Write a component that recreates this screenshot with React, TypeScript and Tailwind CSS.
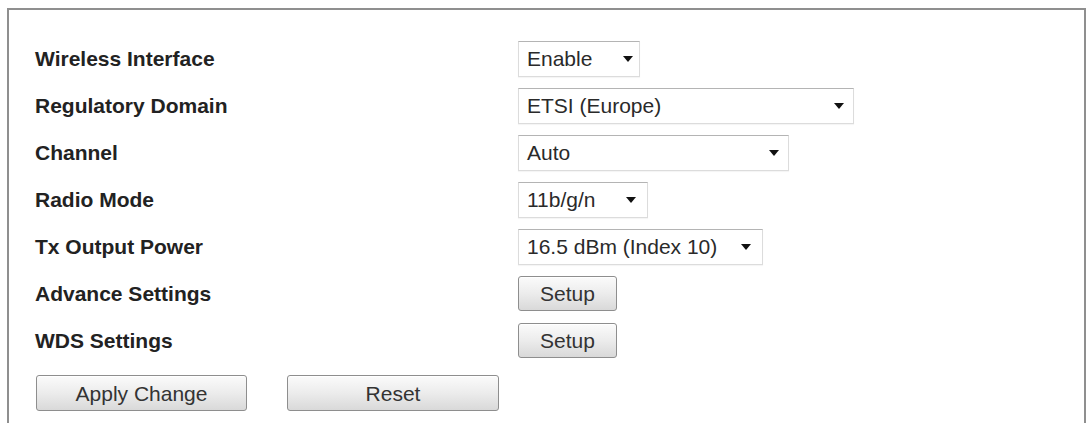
import React from "react";

const font = { fontFamily: '"Liberation Sans", Arial, sans-serif' };

function Caret() {
  return (
    <svg width="10" height="6" viewBox="0 0 10 6" className="shrink-0">
      <path d="M0 0 H10 L5 6 Z" fill="#111" />
    </svg>
  );
}

function Dropdown({ value, width, pad = "pr-[9px]" }: { value: string; width: string; pad?: string }) {
  return (
    <div
      className={`flex h-[36px] items-center justify-between border border-[#dcdcdc] border-t-[#b4b4b4] bg-white pl-[8px] text-[21px] text-[#2a2a2a] shadow-[0_1px_1px_rgba(0,0,0,0.04)] ${pad} ${width}`}
    >
      <span className="leading-none">{value}</span>
      <Caret />
    </div>
  );
}

function PushButton({ label, width, height }: { label: string; width: string; height: string }) {
  return (
    <button
      type="button"
      className={`flex items-center justify-center rounded-[3px] border border-[#8e8e8e] bg-gradient-to-b from-[#fbfbfb] via-[#ececec] to-[#d9d9d9] text-[21px] leading-none text-[#333] shadow-[inset_0_1px_0_#fff] ${width} ${height}`}
      style={font}
    >
      {label}
    </button>
  );
}

const rows: { label: string; control: React.ReactNode }[] = [
  { label: "Wireless Interface", control: <Dropdown value="Enable" width="w-[122px]" pad="pr-[6px]" /> },
  { label: "Regulatory Domain", control: <Dropdown value="ETSI (Europe)" width="w-[336px]" /> },
  { label: "Channel", control: <Dropdown value="Auto" width="w-[271px]" /> },
  { label: "Radio Mode", control: <Dropdown value="11b/g/n" width="w-[130px]" pad="pr-[11px]" /> },
  { label: "Tx Output Power", control: <Dropdown value="16.5 dBm (Index 10)" width="w-[245px]" pad="pr-[11px]" /> },
  { label: "Advance Settings", control: <PushButton label="Setup" width="w-[99px]" height="h-[35px]" /> },
  { label: "WDS Settings", control: <PushButton label="Setup" width="w-[99px]" height="h-[35px]" /> },
];

export default function App() {
  return (
    <div className="h-[423px] w-[1087px] overflow-hidden bg-white" style={font}>
      <div className="ml-[7px] mt-[8px] h-[440px] w-[1079px] border-x-2 border-t-2 border-[#8f8f8f] pl-[26px] pt-[25px]">
        <div className="flex flex-col">
          {rows.map((r, i) => (
            <div key={i} className="flex h-[47px] items-center">
              <div className="w-[483px] text-[21px] font-bold leading-none text-[#222]">{r.label}</div>
              {r.control}
            </div>
          ))}
        </div>
        <div className="mt-[11px] flex gap-[40px] pl-[1px]">
          <PushButton label="Apply Change" width="w-[211px]" height="h-[36px]" />
          <PushButton label="Reset" width="w-[212px]" height="h-[36px]" />
        </div>
      </div>
    </div>
  );
}
